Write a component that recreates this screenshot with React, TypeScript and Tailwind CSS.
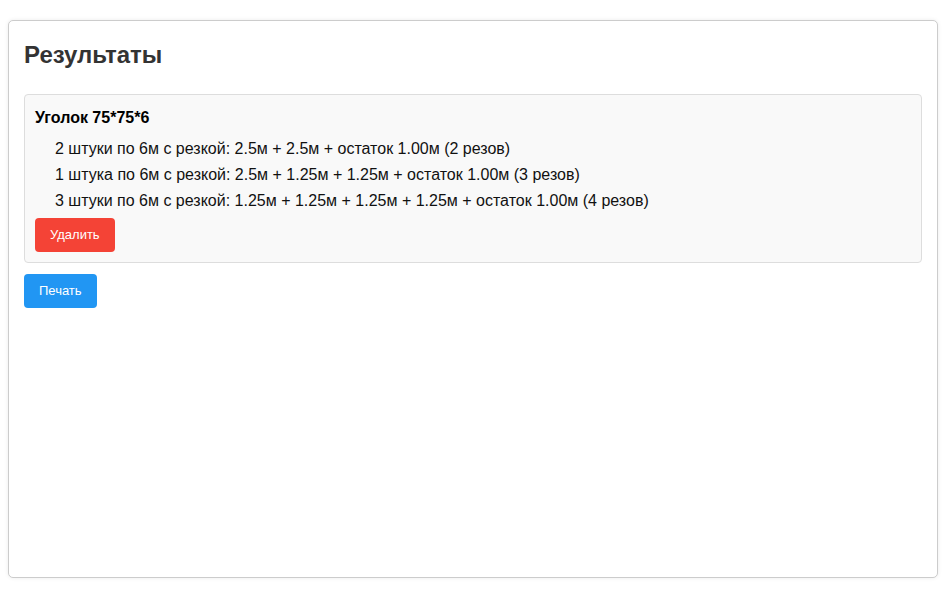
const results = [
  "2 штуки по 6м с резкой: 2.5м + 2.5м + остаток 1.00м (2 резов)",
  "1 штука по 6м с резкой: 2.5м + 1.25м + 1.25м + остаток 1.00м (3 резов)",
  "3 штуки по 6м с резкой: 1.25м + 1.25м + 1.25м + 1.25м + остаток 1.00м (4 резов)",
];

export default function App() {
  return (
    <div className="min-h-[594px] bg-white pt-[20px] pl-[8px] font-['Liberation_Sans',Arial,sans-serif]">
      {/* Results card */}
      <div className="w-[930px] h-[558px] border border-[#cccccc] rounded-[5px] bg-white px-[15px] pt-[20px] shadow-[0_0_4px_rgba(0,0,0,0.08)]">
        <h2 className="text-[24px] leading-[28px] font-bold text-[#333333] mb-[25px]">
          Результаты
        </h2>

        <div className="border border-[#dddddd] rounded-[4px] bg-[#f9f9f9] px-[10px] pt-[14px] pb-[10px]">
          <div className="text-[16px] leading-[18px] font-bold text-black">Уголок 75*75*6</div>
          <div className="mt-[9px] pl-[20px]">
            {results.map((r) => (
              <div key={r} className="text-[16px] leading-[26px] text-[#111111]">
                {r}
              </div>
            ))}
          </div>
          <button className="mt-[4px] h-[34px] px-[15px] rounded-[4px] bg-[#f44336] text-white text-[13px]">
            Удалить
          </button>
        </div>

        <button className="mt-[11px] h-[34px] px-[15px] rounded-[4px] bg-[#2196f3] text-white text-[13px]">
          Печать
        </button>
      </div>
    </div>
  );
}
